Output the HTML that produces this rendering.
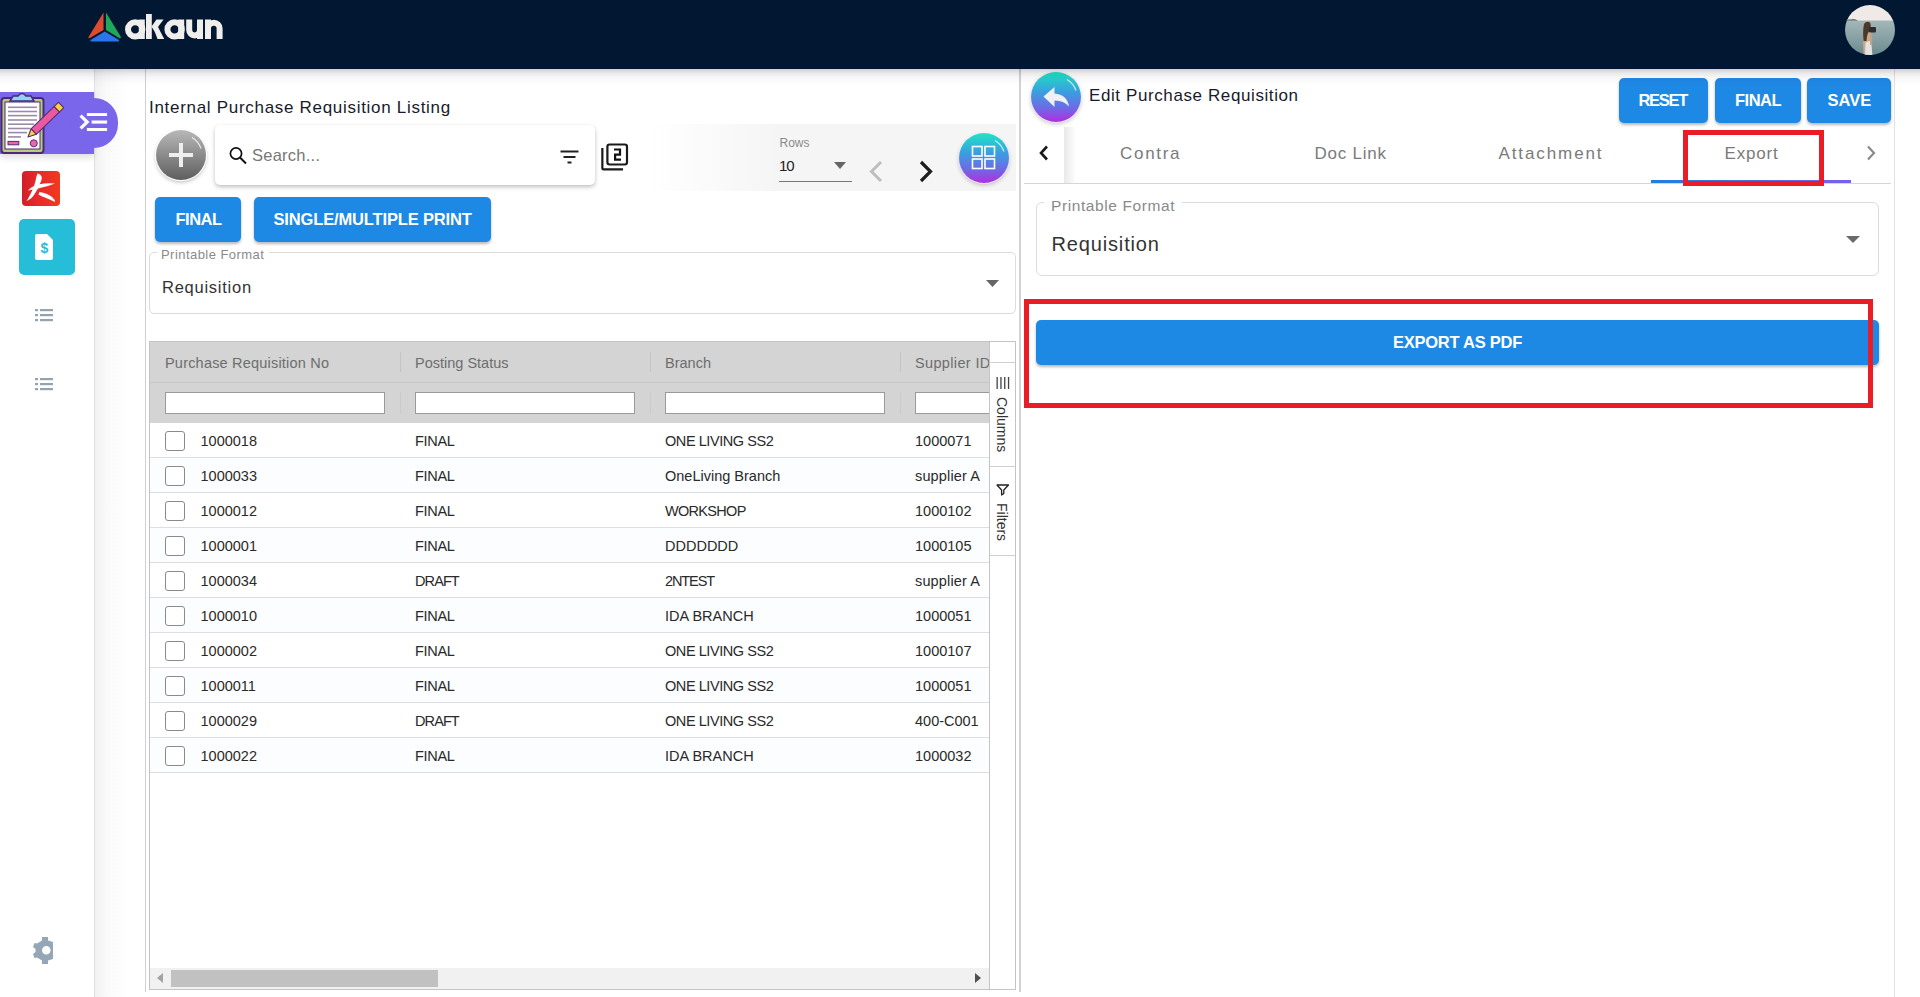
<!DOCTYPE html>
<html><head><meta charset="utf-8">
<style>
*{box-sizing:border-box;margin:0;padding:0}
html,body{width:1920px;height:997px;overflow:hidden;background:#fff;font-family:"Liberation Sans",sans-serif;color:#222}
.abs{position:absolute}
.t{position:absolute;line-height:1;white-space:nowrap}
#hdr{position:absolute;left:0;top:0;width:1920px;height:69px;background:#021731;z-index:5}
#hdrshadow{position:absolute;left:0;top:69px;width:1920px;height:19px;background:linear-gradient(rgba(10,20,40,.2),rgba(0,0,0,.09) 4px,rgba(0,0,0,.04) 8px,rgba(0,0,0,.01) 13px,rgba(0,0,0,0));z-index:4}
#side{position:absolute;left:0;top:69px;width:95px;height:928px;background:#fff;border-right:1px solid #e0e0e0}
#strip{position:absolute;left:95px;top:69px;width:51px;height:928px;background:linear-gradient(90deg,#f1f1f1,#fafafa 12px,#fff 32px)}
#stripline{position:absolute;left:145px;top:69px;width:1px;height:923px;background:#d0d0d0}
#lp{position:absolute;left:146px;top:69px;width:875px;height:923px;background:#fff;border-right:2px solid #d2d2d2}
#rp{position:absolute;left:1021px;top:69px;width:874px;height:928px;background:#fff;border-right:1px solid #e2e2e2}
.btn{position:absolute;background:#1e88e5;border-radius:5px;box-shadow:0 2px 3px rgba(0,0,0,.28)}
.bt{position:absolute;line-height:1;white-space:nowrap;color:#fff;font-weight:bold}
.cb{position:absolute;left:165px;width:20px;height:20px;border:1.5px solid #8a8a8a;border-radius:3px;background:#fff}
.fin{position:absolute;height:22px;background:#fff;border:1px solid #9a9a9a}
.hsep{position:absolute;width:1px;background:#c4c4c4}
.red{position:absolute;border:5px solid #ea1c25;z-index:10}
</style></head><body>
<div id="hdr">
  <svg class="abs" style="left:88px;top:12px" width="34" height="30" viewBox="0 0 34 30">
    <path d="M15.5 0.5 L15.5 18 L1 26.5 Q0 26 0.8 24.5 Z" fill="#e04a2e"/>
    <path d="M18 0.5 L32.8 24.8 Q33.2 26 32 26.5 L18 18 Z" fill="#1fa85a"/>
    <path d="M16.8 19.5 L31 28 Q31.5 29.5 30 29.5 L3.5 29.5 Q2 29.5 2.5 28 Z" fill="#2a76e8"/>
  </svg>
  <svg class="abs" style="left:124px;top:13px" width="100" height="28" viewBox="0 0 100 28">
    <g fill="none" stroke="#efeeec" stroke-width="6">
      <circle cx="11.2" cy="16.4" r="7.2"/>
      <circle cx="50.6" cy="16.4" r="7.2"/>
      <path d="M65.2 6.5 V17 A5.4 5.4 0 0 0 76 17"/>
      <path d="M84 26 V15.5 A5.8 5.8 0 0 1 95.6 15.5 V26"/>
    </g>
    <g fill="#efeeec">
      <rect x="14.8" y="6.5" width="6" height="19.5"/>
      <rect x="54.2" y="6.5" width="6" height="19.5"/>
      <rect x="73" y="6.5" width="6" height="19.5"/>
      <rect x="81" y="6.5" width="6" height="19.5"/>
      <rect x="22" y="1" width="5.8" height="25"/>
      <path d="M27.5 13.5 L32.5 6.5 L39.6 6.5 L30.5 18.5 Z"/>
      <path d="M29.5 15.5 L33 12 L40.2 26 L33.5 26 Z"/>
    </g>
  </svg>
  <svg class="abs" style="left:1845px;top:5px" width="50" height="50" viewBox="0 0 50 50">
    <defs><clipPath id="av"><circle cx="25" cy="25" r="25"/></clipPath>
    <linearGradient id="sea" x1="0" y1="0" x2="0" y2="1"><stop offset="0" stop-color="#a3b7b8"/><stop offset="0.5" stop-color="#87a1a4"/><stop offset="1" stop-color="#6a8a8e"/></linearGradient></defs>
    <g clip-path="url(#av)">
      <rect x="0" y="0" width="50" height="16" fill="#efeae5"/>
      <rect x="0" y="15.5" width="50" height="35" fill="url(#sea)"/>
      <path d="M0 15.5 Q3 14 6 14.5 Q9 13.5 13 15.5 Z" fill="#3c4a48"/>
      <path d="M18.5 50 L18 33 Q17 26 19 19 Q21 15.5 24.5 17 Q27 19 26 24 L27 50 Z" fill="#c9a98c"/>
      <path d="M18.5 36 Q17.5 26 19 19 Q21.5 15.5 25 17.5 Q26.5 20 25 26 Q22 27 21.5 36 Z" fill="#4a3a2c"/>
      <path d="M20 50 L20.5 38 Q23 35 26 37 L27.5 50 Z" fill="#e6e2e0"/>
      <rect x="24" y="22" width="7" height="5.5" rx="1" fill="#2b2d2e"/>
      <path d="M25 27 Q28 30 27 40 L25 40 Z" fill="#c4a285"/>
    </g>
  </svg>
</div>
<div id="side">
  <!-- acrobat-ish -->
  <div class="abs" style="left:22px;top:102px;width:38px;height:35px;border-radius:4px;background:linear-gradient(90deg,#cf2027,#e8282a 40%,#f03a1e)"></div>
  <svg class="abs" style="left:22px;top:102px" width="38" height="35" viewBox="0 0 38 35">
    <path d="M15.5 2.5 Q21 3.5 19.5 9 Q17 17 12 24 Q9 28.5 4.5 30 Q6 28 8 24 Q12 17 13.5 10 Q14 6 15.5 2.5 Z" fill="#fff"/>
    <path d="M6 19.5 Q9 15.5 16 13.5 Q25 11.5 33 12.5 Q27 15 18 17 Q11 18.5 6 19.5 Z" fill="#fff"/>
    <path d="M17.5 21 Q25 22 30 26 Q33 28.5 33 31 Q29 29 24 27 Q19 25 16.5 23.5 Z" fill="#fff"/>
  </svg>
  <!-- teal -->
  <div class="abs" style="left:19px;top:150px;width:56px;height:56px;border-radius:5px;background:#25bdd8"></div>
  <svg class="abs" style="left:35px;top:165px" width="19" height="26" viewBox="0 0 19 26">
    <path d="M2 0 L12 0 L18 6 L18 24 Q18 26 16 26 L2 26 Q0 26 0 24 L0 2 Q0 0 2 0 Z" fill="#fff"/>
    <text x="9.5" y="19" text-anchor="middle" font-family="Liberation Sans" font-weight="bold" font-size="14" fill="#25bdd8">$</text>
  </svg>
  <!-- list icons -->
  <svg class="abs" style="left:35px;top:240px" width="19" height="13" viewBox="0 0 19 13">
    <g fill="#93a3af"><rect x="0" y="0" width="3" height="2.2"/><rect x="5" y="0" width="13" height="2.2"/>
    <rect x="0" y="5" width="3" height="2.2"/><rect x="5" y="5" width="13" height="2.2"/>
    <rect x="0" y="10" width="3" height="2.2"/><rect x="5" y="10" width="13" height="2.2"/></g>
  </svg>
  <svg class="abs" style="left:35px;top:309px" width="19" height="13" viewBox="0 0 19 13">
    <g fill="#93a3af"><rect x="0" y="0" width="3" height="2.2"/><rect x="5" y="0" width="13" height="2.2"/>
    <rect x="0" y="5" width="3" height="2.2"/><rect x="5" y="5" width="13" height="2.2"/>
    <rect x="0" y="10" width="3" height="2.2"/><rect x="5" y="10" width="13" height="2.2"/></g>
  </svg>
  <!-- gear -->
  <svg class="abs" style="left:33px;top:868px" width="21" height="27" viewBox="0 0 21 27">
    <path fill="#94a7b6" d="M9 0 L15 0 L15 3.5 L20 5 L20 22 L15 23.5 L15 27 L9 27 L9 23.5 L4 20.5 L1.5 21 L0 17 L2.5 15 L2.5 12 L0 10 L1.5 6 L4 6.5 L9 3.5 Z M13.3 9 A4.3 4.3 0 1 0 13.3 17.6 A4.3 4.3 0 1 0 13.3 9 Z" fill-rule="evenodd"/>
  </svg>
</div>
<div id="strip"></div><div id="stripline"></div>
<div class="abs" style="left:0;top:69px;width:120px;height:100px;z-index:3">
  <!-- purple pill -->
  <div class="abs" style="left:0;top:23px;width:94px;height:62px;background:#7966ea;box-shadow:0 4px 6px rgba(0,0,0,.12)"></div>
  <div class="abs" style="left:70px;top:29px;width:48px;height:50px;border-radius:25px;background:#7966ea"></div>
  <svg class="abs" style="left:0;top:23px" width="64" height="62" viewBox="0 0 64 62">
    <rect x="1.5" y="6" width="42" height="55" rx="3" fill="#b9cc7c" stroke="#4a2a78" stroke-width="2"/>
    <rect x="5" y="10" width="35" height="47" fill="#fff" stroke="#4a2a78" stroke-width="1"/>
    <path d="M10 9 L13 4 L18 4 Q22 -1 26 4 L31 4 L34 9 Z" fill="#8fd3ee" stroke="#4a2a78" stroke-width="1.5"/>
    <g stroke="#9a8aaa" stroke-width="1.6">
      <line x1="8" y1="15.3" x2="37" y2="15.3"/><line x1="8" y1="19.5" x2="37" y2="19.5"/><line x1="8" y1="23.6" x2="37" y2="23.6"/>
      <line x1="8" y1="28" x2="37" y2="28"/><line x1="8" y1="32.2" x2="34" y2="32.2"/><line x1="8" y1="36.5" x2="30" y2="36.5"/>
      <line x1="8" y1="40.6" x2="27" y2="40.6"/><line x1="8" y1="44.9" x2="21" y2="44.9"/>
    </g>
    <rect x="8" y="49.4" width="10.8" height="3.4" fill="#e867a8" stroke="#5a2a78" stroke-width="1"/>
    <circle cx="33.8" cy="51.3" r="3.5" fill="#e867a8" stroke="#5a2a78" stroke-width="1"/>
    <g transform="rotate(-44 28 45)">
      <path d="M28 45 L36 41.2 L36 48.8 Z" fill="#f6d23a" stroke="#5a2a78" stroke-width="1.1" stroke-linejoin="round"/>
      <rect x="36" y="41.2" width="32" height="7.6" fill="#ea5a9e" stroke="#5a2a78" stroke-width="1.1"/>
      <rect x="68" y="41.2" width="6" height="7.6" fill="#f6d23a" stroke="#5a2a78" stroke-width="1.1"/>
    </g>
  </svg>
  <svg class="abs" style="left:79px;top:43px" width="30" height="20" viewBox="0 0 30 20">
    <path d="M1.6 3.6 L8.2 10 L1.6 16.4" fill="none" stroke="#fff" stroke-width="3.2"/>
    <rect x="7.9" y="1.1" width="20.2" height="2.9" fill="#fff"/>
    <rect x="12.6" y="8.5" width="15.5" height="3.1" fill="#fff"/>
    <rect x="7.9" y="16" width="20.2" height="3" fill="#fff"/>
  </svg>
</div>
<div id="lp">
</div>
<div id="rp"></div>
<div id="hdrshadow"></div>

<!-- LEFT PANEL CONTENT -->
<div class="t" style="left:149px;top:98.6px;font-size:17px;color:#1a1a2c;letter-spacing:0.7px">Internal Purchase Requisition Listing</div>
<!-- plus button -->
<div class="abs" style="left:156px;top:130px;width:50px;height:50px;border-radius:50%;background:linear-gradient(#b8b8b8,#5e5e5e);box-shadow:0 0 0 1.2px rgba(255,255,255,.9),0 2px 4px rgba(0,0,0,.3)"></div>
<svg class="abs" style="left:156px;top:130px" width="50" height="50" viewBox="0 0 50 50"><path d="M36 7.5 A21 21 0 0 1 45 18.5" fill="none" stroke="rgba(255,255,255,.8)" stroke-width="1.1"/></svg>
<svg class="abs" style="left:168px;top:142px" width="26" height="26" viewBox="0 0 26 26"><rect x="11" y="1" width="4" height="24" fill="#eee"/><rect x="1" y="11" width="24" height="4" fill="#eee"/></svg>
<!-- search box -->
<div class="abs" style="left:215px;top:125px;width:380px;height:60px;border-radius:5px;background:#fff;box-shadow:0 2px 4px rgba(0,0,0,.25)"></div>
<svg class="abs" style="left:229px;top:146px" width="19" height="19" viewBox="0 0 19 19"><circle cx="7" cy="7.5" r="5.6" fill="none" stroke="#111" stroke-width="1.7"/><line x1="11" y1="11.5" x2="17" y2="17.5" stroke="#111" stroke-width="2"/></svg>
<div class="t" style="left:252px;top:147px;font-size:16.5px;color:#777;letter-spacing:0.25px">Search...</div>
<svg class="abs" style="left:560px;top:149.5px" width="20" height="14" viewBox="0 0 20 14"><rect x="0.5" y="0.5" width="18" height="2" fill="#222"/><rect x="3.5" y="6" width="12" height="2" fill="#222"/><rect x="7.5" y="11.5" width="4" height="2" fill="#222"/></svg>
<svg class="abs" style="left:600px;top:142px" width="30" height="30" viewBox="0 0 30 30">
  <path d="M2.35 6 L2.35 26.3 Q2.35 27.45 3.5 27.45 L23 27.45" fill="none" stroke="#1a1a1a" stroke-width="2.2"/>
  <rect x="7.4" y="2.5" width="19.6" height="20" rx="2.2" fill="none" stroke="#1a1a1a" stroke-width="2.2"/>
  <path d="M14 7.5 H20 V12.6 H15.1 V17.7 H21" fill="none" stroke="#111" stroke-width="2.2"/>
</svg>
<!-- pagination strip -->
<div class="abs" style="left:650px;top:124px;width:366px;height:67px;background:linear-gradient(90deg,rgba(245,245,245,0),#f5f5f5 35%,#f5f5f5)"></div>
<div class="t" style="left:779.5px;top:137.3px;font-size:12px;color:#8a8a8a">Rows</div>
<div class="t" style="left:779px;top:157.8px;font-size:15px;color:#222;letter-spacing:-1px">10</div>
<svg class="abs" style="left:834px;top:162px" width="12" height="7" viewBox="0 0 12 7"><path d="M0 0 L12 0 L6 7 Z" fill="#666"/></svg>
<div class="abs" style="left:779px;top:180.5px;width:73px;height:1px;background:#777"></div>
<svg class="abs" style="left:868px;top:160px" width="16" height="23" viewBox="0 0 16 23"><path d="M13 2 L3.5 11.5 L13 21" fill="none" stroke="#bdbdbd" stroke-width="3"/></svg>
<svg class="abs" style="left:918px;top:160px" width="17" height="23" viewBox="0 0 17 23"><path d="M3 2 L12.5 11.5 L3 21" fill="none" stroke="#1e1e1e" stroke-width="3.2"/></svg>
<div class="abs" style="left:959px;top:133px;width:50px;height:50px;border-radius:50%;background:linear-gradient(#1de6c4 0%,#3a9ee0 40%,#6a6ee6 70%,#b02ee0 100%);box-shadow:0 0 0 1px rgba(255,235,255,.7),0 2px 4px rgba(0,0,0,.25)"></div>
<svg class="abs" style="left:959px;top:133px" width="50" height="50" viewBox="0 0 50 50"><path d="M36 7.5 A21 21 0 0 1 45 18.5" fill="none" stroke="rgba(255,255,255,.8)" stroke-width="1.1"/></svg>
<svg class="abs" style="left:971px;top:145px" width="26" height="26" viewBox="0 0 26 26"><g fill="none" stroke="#fff" stroke-width="1.6"><rect x="1.5" y="1.5" width="9.5" height="9.5"/><rect x="14" y="1.5" width="9.5" height="9.5"/><rect x="1.5" y="14" width="9.5" height="9.5"/><rect x="14" y="14" width="9.5" height="9.5"/></g></svg>
<!-- buttons -->
<div class="btn" style="left:155px;top:197px;width:86px;height:45px"></div>
<div class="bt" style="left:175.5px;top:211px;font-size:16.5px;letter-spacing:-0.5px">FINAL</div>
<div class="btn" style="left:254px;top:197px;width:237px;height:45px"></div>
<div class="bt" style="left:273.5px;top:211px;font-size:16.5px;letter-spacing:-0.15px">SINGLE/MULTIPLE PRINT</div>
<!-- printable format left -->
<div class="abs" style="left:149px;top:252px;width:867px;height:62px;border:1px solid #dcdcdc;border-radius:5px"></div>
<div class="abs" style="left:157px;top:248px;width:112px;height:10px;background:#fff"></div>
<div class="t" style="left:161px;top:248.4px;font-size:13px;color:#8a8a8a;letter-spacing:0.45px">Printable Format</div>
<div class="t" style="left:162px;top:279.4px;font-size:16.5px;color:#333;letter-spacing:0.75px">Requisition</div>
<svg class="abs" style="left:986px;top:280px" width="13" height="7" viewBox="0 0 13 7"><path d="M0 0 L13 0 L6.5 7 Z" fill="#666"/></svg>

<!-- GRID -->
<div class="abs" style="left:149px;top:341px;width:867px;height:649px;border:1px solid #c4c4c4;background:#fff"></div>
<div class="abs" style="left:150px;top:342px;width:839px;height:81px;background:#d4d4d4"></div>
<div class="abs" style="left:150px;top:382px;width:839px;height:1px;background:#c6c6c6"></div>
<div class="hsep" style="left:399.5px;top:352px;height:20px"></div>
<div class="hsep" style="left:649.5px;top:352px;height:20px"></div>
<div class="hsep" style="left:899.5px;top:352px;height:20px"></div>
<div class="hsep" style="left:399.5px;top:392px;height:22px;background:#cacaca"></div>
<div class="hsep" style="left:649.5px;top:392px;height:22px;background:#cacaca"></div>
<div class="hsep" style="left:899.5px;top:392px;height:22px;background:#cacaca"></div>
<div class="t" style="left:165px;top:355.5px;font-size:14.5px;color:#6d6d6d;letter-spacing:0.2px">Purchase Requisition No</div>
<div class="t" style="left:415px;top:355.5px;font-size:14.5px;color:#6d6d6d">Posting Status</div>
<div class="t" style="left:665px;top:355.5px;font-size:14.5px;color:#6d6d6d">Branch</div>
<div class="t" style="left:915px;top:355.5px;font-size:14.5px;color:#6d6d6d;letter-spacing:0.35px">Supplier ID</div>
<div class="fin" style="left:165px;top:392px;width:220px"></div>
<div class="fin" style="left:415px;top:392px;width:220px"></div>
<div class="fin" style="left:665px;top:392px;width:220px"></div>
<div class="fin" style="left:915px;top:392px;width:80px"></div>
<div class="abs" style="left:150px;top:423px;width:839px;height:35px;background:#fff;border-bottom:1px solid #dcdee2"></div>
<div class="cb" style="top:431px"></div>
<div class="t" style="left:200.5px;top:433.53px;font-size:14.5px;color:#2a2a2a;font-weight:normal;letter-spacing:0px;">1000018</div>
<div class="t" style="left:415px;top:433.53px;font-size:14.5px;color:#2a2a2a;font-weight:normal;letter-spacing:-0.3px;">FINAL</div>
<div class="t" style="left:665px;top:433.53px;font-size:14.5px;color:#2a2a2a;font-weight:normal;letter-spacing:-0.43px;">ONE LIVING SS2</div>
<div class="t" style="left:915px;top:433.53px;font-size:14.5px;color:#2a2a2a;font-weight:normal;letter-spacing:0px;">1000071</div>
<div class="abs" style="left:150px;top:458px;width:839px;height:35px;background:#fcfdfe;border-bottom:1px solid #dcdee2"></div>
<div class="cb" style="top:466px"></div>
<div class="t" style="left:200.5px;top:468.53px;font-size:14.5px;color:#2a2a2a;font-weight:normal;letter-spacing:0px;">1000033</div>
<div class="t" style="left:415px;top:468.53px;font-size:14.5px;color:#2a2a2a;font-weight:normal;letter-spacing:-0.3px;">FINAL</div>
<div class="t" style="left:665px;top:468.53px;font-size:14.5px;color:#2a2a2a;font-weight:normal;letter-spacing:0px;">OneLiving Branch</div>
<div class="t" style="left:915px;top:468.53px;font-size:14.5px;color:#2a2a2a;font-weight:normal;letter-spacing:0.15px;">supplier A</div>
<div class="abs" style="left:150px;top:493px;width:839px;height:35px;background:#fff;border-bottom:1px solid #dcdee2"></div>
<div class="cb" style="top:501px"></div>
<div class="t" style="left:200.5px;top:503.53px;font-size:14.5px;color:#2a2a2a;font-weight:normal;letter-spacing:0px;">1000012</div>
<div class="t" style="left:415px;top:503.53px;font-size:14.5px;color:#2a2a2a;font-weight:normal;letter-spacing:-0.3px;">FINAL</div>
<div class="t" style="left:665px;top:503.53px;font-size:14.5px;color:#2a2a2a;font-weight:normal;letter-spacing:-0.7px;">WORKSHOP</div>
<div class="t" style="left:915px;top:503.53px;font-size:14.5px;color:#2a2a2a;font-weight:normal;letter-spacing:0px;">1000102</div>
<div class="abs" style="left:150px;top:528px;width:839px;height:35px;background:#fcfdfe;border-bottom:1px solid #dcdee2"></div>
<div class="cb" style="top:536px"></div>
<div class="t" style="left:200.5px;top:538.53px;font-size:14.5px;color:#2a2a2a;font-weight:normal;letter-spacing:0px;">1000001</div>
<div class="t" style="left:415px;top:538.53px;font-size:14.5px;color:#2a2a2a;font-weight:normal;letter-spacing:-0.3px;">FINAL</div>
<div class="t" style="left:665px;top:538.53px;font-size:14.5px;color:#2a2a2a;font-weight:normal;letter-spacing:0px;">DDDDDDD</div>
<div class="t" style="left:915px;top:538.53px;font-size:14.5px;color:#2a2a2a;font-weight:normal;letter-spacing:0px;">1000105</div>
<div class="abs" style="left:150px;top:563px;width:839px;height:35px;background:#fff;border-bottom:1px solid #dcdee2"></div>
<div class="cb" style="top:571px"></div>
<div class="t" style="left:200.5px;top:573.53px;font-size:14.5px;color:#2a2a2a;font-weight:normal;letter-spacing:0px;">1000034</div>
<div class="t" style="left:415px;top:573.53px;font-size:14.5px;color:#2a2a2a;font-weight:normal;letter-spacing:-0.9px;">DRAFT</div>
<div class="t" style="left:665px;top:573.53px;font-size:14.5px;color:#2a2a2a;font-weight:normal;letter-spacing:-1.1px;">2NTEST</div>
<div class="t" style="left:915px;top:573.53px;font-size:14.5px;color:#2a2a2a;font-weight:normal;letter-spacing:0.15px;">supplier A</div>
<div class="abs" style="left:150px;top:598px;width:839px;height:35px;background:#fcfdfe;border-bottom:1px solid #dcdee2"></div>
<div class="cb" style="top:606px"></div>
<div class="t" style="left:200.5px;top:608.53px;font-size:14.5px;color:#2a2a2a;font-weight:normal;letter-spacing:0px;">1000010</div>
<div class="t" style="left:415px;top:608.53px;font-size:14.5px;color:#2a2a2a;font-weight:normal;letter-spacing:-0.3px;">FINAL</div>
<div class="t" style="left:665px;top:608.53px;font-size:14.5px;color:#2a2a2a;font-weight:normal;letter-spacing:0px;">IDA BRANCH</div>
<div class="t" style="left:915px;top:608.53px;font-size:14.5px;color:#2a2a2a;font-weight:normal;letter-spacing:0px;">1000051</div>
<div class="abs" style="left:150px;top:633px;width:839px;height:35px;background:#fff;border-bottom:1px solid #dcdee2"></div>
<div class="cb" style="top:641px"></div>
<div class="t" style="left:200.5px;top:643.53px;font-size:14.5px;color:#2a2a2a;font-weight:normal;letter-spacing:0px;">1000002</div>
<div class="t" style="left:415px;top:643.53px;font-size:14.5px;color:#2a2a2a;font-weight:normal;letter-spacing:-0.3px;">FINAL</div>
<div class="t" style="left:665px;top:643.53px;font-size:14.5px;color:#2a2a2a;font-weight:normal;letter-spacing:-0.43px;">ONE LIVING SS2</div>
<div class="t" style="left:915px;top:643.53px;font-size:14.5px;color:#2a2a2a;font-weight:normal;letter-spacing:0px;">1000107</div>
<div class="abs" style="left:150px;top:668px;width:839px;height:35px;background:#fcfdfe;border-bottom:1px solid #dcdee2"></div>
<div class="cb" style="top:676px"></div>
<div class="t" style="left:200.5px;top:678.53px;font-size:14.5px;color:#2a2a2a;font-weight:normal;letter-spacing:0px;">1000011</div>
<div class="t" style="left:415px;top:678.53px;font-size:14.5px;color:#2a2a2a;font-weight:normal;letter-spacing:-0.3px;">FINAL</div>
<div class="t" style="left:665px;top:678.53px;font-size:14.5px;color:#2a2a2a;font-weight:normal;letter-spacing:-0.43px;">ONE LIVING SS2</div>
<div class="t" style="left:915px;top:678.53px;font-size:14.5px;color:#2a2a2a;font-weight:normal;letter-spacing:0px;">1000051</div>
<div class="abs" style="left:150px;top:703px;width:839px;height:35px;background:#fff;border-bottom:1px solid #dcdee2"></div>
<div class="cb" style="top:711px"></div>
<div class="t" style="left:200.5px;top:713.53px;font-size:14.5px;color:#2a2a2a;font-weight:normal;letter-spacing:0px;">1000029</div>
<div class="t" style="left:415px;top:713.53px;font-size:14.5px;color:#2a2a2a;font-weight:normal;letter-spacing:-0.9px;">DRAFT</div>
<div class="t" style="left:665px;top:713.53px;font-size:14.5px;color:#2a2a2a;font-weight:normal;letter-spacing:-0.43px;">ONE LIVING SS2</div>
<div class="t" style="left:915px;top:713.53px;font-size:14.5px;color:#2a2a2a;font-weight:normal;letter-spacing:0px;">400-C001</div>
<div class="abs" style="left:150px;top:738px;width:839px;height:35px;background:#fcfdfe;border-bottom:1px solid #dcdee2"></div>
<div class="cb" style="top:746px"></div>
<div class="t" style="left:200.5px;top:748.53px;font-size:14.5px;color:#2a2a2a;font-weight:normal;letter-spacing:0px;">1000022</div>
<div class="t" style="left:415px;top:748.53px;font-size:14.5px;color:#2a2a2a;font-weight:normal;letter-spacing:-0.3px;">FINAL</div>
<div class="t" style="left:665px;top:748.53px;font-size:14.5px;color:#2a2a2a;font-weight:normal;letter-spacing:0px;">IDA BRANCH</div>
<div class="t" style="left:915px;top:748.53px;font-size:14.5px;color:#2a2a2a;font-weight:normal;letter-spacing:0px;">1000032</div>

<!-- side bar columns/filters -->
<div class="abs" style="left:989px;top:342px;width:26px;height:647px;background:#fff;border-left:1px solid #c4c4c4"></div>
<div class="abs" style="left:990px;top:362px;width:25px;height:1px;background:#d0d0d0"></div>
<div class="abs" style="left:990px;top:466px;width:25px;height:1px;background:#d0d0d0"></div>
<div class="abs" style="left:990px;top:555px;width:25px;height:1px;background:#d0d0d0"></div>
<svg class="abs" style="left:996px;top:377px" width="14" height="12" viewBox="0 0 14 12"><g fill="#444"><rect x="0.5" y="0" width="1.3" height="12"/><rect x="4.3" y="0" width="1.3" height="12"/><rect x="8.1" y="0" width="1.3" height="12"/><rect x="11.9" y="0" width="1.3" height="12"/></g></svg>
<div class="t" style="left:995px;top:397px;font-size:14px;color:#333;writing-mode:vertical-rl">Columns</div>
<svg class="abs" style="left:996px;top:484px" width="14" height="12" viewBox="0 0 14 12"><path d="M1 1 L12.5 1 L7.8 6 L7.8 9.5 L5.6 11 L5.6 6 Z" fill="none" stroke="#222" stroke-width="1.3" stroke-linejoin="round"/></svg>
<div class="t" style="left:995px;top:503px;font-size:14px;color:#333;writing-mode:vertical-rl">Filters</div>
<!-- h scrollbar -->
<div class="abs" style="left:150px;top:968px;width:839px;height:21px;background:#f1f1f1"></div>
<div class="abs" style="left:171px;top:970px;width:267px;height:17px;background:#c1c1c1"></div>
<svg class="abs" style="left:157px;top:973px" width="7" height="10" viewBox="0 0 7 10"><path d="M6 0 L0 5 L6 10 Z" fill="#a3a3a3"/></svg>
<svg class="abs" style="left:975px;top:973px" width="7" height="10" viewBox="0 0 7 10"><path d="M0 0 L6 5 L0 10 Z" fill="#505050"/></svg>

<!-- RIGHT PANEL CONTENT -->
<div class="abs" style="left:1031px;top:72px;width:50px;height:50px;border-radius:50%;background:linear-gradient(#1de6c4 0%,#3a9ee0 40%,#6a6ee6 70%,#b02ee0 100%);box-shadow:0 0 0 1px rgba(255,235,255,.7),0 2px 4px rgba(0,0,0,.25)"></div>
<svg class="abs" style="left:1031px;top:72px" width="50" height="50" viewBox="0 0 50 50"><path d="M36 7.5 A21 21 0 0 1 45 18.5" fill="none" stroke="rgba(255,255,255,.8)" stroke-width="1.1"/></svg>
<svg class="abs" style="left:1043px;top:85px" width="28" height="24" viewBox="0 0 28 24"><path d="M11.5 2 L0.5 11.5 L11.5 22 L11.5 15.5 Q21 15.5 26 21.5 Q24 9.5 11.5 8.5 Z" fill="#eef0f4"/></svg>
<div class="t" style="left:1089px;top:86.9px;font-size:17px;color:#1a1a2c;letter-spacing:0.6px">Edit Purchase Requisition</div>
<div class="btn" style="left:1619px;top:78px;width:89px;height:45px"></div>
<div class="bt" style="left:1638.5px;top:92px;font-size:16.5px;letter-spacing:-1.3px">RESET</div>
<div class="btn" style="left:1715px;top:78px;width:86px;height:45px"></div>
<div class="bt" style="left:1735px;top:92px;font-size:16.5px;letter-spacing:-0.5px">FINAL</div>
<div class="btn" style="left:1807px;top:78px;width:84px;height:45px"></div>
<div class="bt" style="left:1827.5px;top:92px;font-size:16.5px">SAVE</div>
<!-- tabs -->
<div class="abs" style="left:1024px;top:183px;width:867px;height:1px;background:#d6d6d6"></div>
<div class="abs" style="left:1064px;top:127px;width:12px;height:56px;background:linear-gradient(90deg,rgba(0,0,0,.09),rgba(0,0,0,0))"></div>
<svg class="abs" style="left:1038px;top:145px" width="12" height="16" viewBox="0 0 12 16"><path d="M9 1.5 L3 8 L9 14.5" fill="none" stroke="#1a1a1a" stroke-width="2.6"/></svg>
<div class="t" style="left:1120px;top:144.6px;font-size:17px;color:#7a7a7a;letter-spacing:1.7px">Contra</div>
<div class="t" style="left:1314.5px;top:144.6px;font-size:17px;color:#7a7a7a;letter-spacing:0.75px">Doc Link</div>
<div class="t" style="left:1498.5px;top:144.6px;font-size:17px;color:#7a7a7a;letter-spacing:1.9px">Attachment</div>
<div class="t" style="left:1724.5px;top:144.6px;font-size:17px;color:#7a7a7a;letter-spacing:0.8px">Export</div>
<div class="abs" style="left:1651px;top:180px;width:200px;height:3px;background:linear-gradient(90deg,#1e7fe0,#7a5ff0)"></div>
<svg class="abs" style="left:1865px;top:145px" width="12" height="16" viewBox="0 0 12 16"><path d="M3 1.5 L9 8 L3 14.5" fill="none" stroke="#8a8a8a" stroke-width="2.2"/></svg>
<div class="red" style="left:1683px;top:130px;width:141px;height:56px"></div>
<!-- printable format right -->
<div class="abs" style="left:1036px;top:202px;width:843px;height:74px;border:1px solid #dcdcdc;border-radius:6px"></div>
<div class="abs" style="left:1044px;top:196px;width:138px;height:12px;background:#fff"></div>
<div class="t" style="left:1051px;top:197.6px;font-size:15.5px;color:#8a8a8a;letter-spacing:0.6px">Printable Format</div>
<div class="t" style="left:1051.5px;top:234.1px;font-size:20px;color:#333;letter-spacing:0.85px">Requisition</div>
<svg class="abs" style="left:1846px;top:236px" width="14" height="7" viewBox="0 0 14 7"><path d="M0 0 L14 0 L7 7 Z" fill="#6a6a6a"/></svg>
<div class="btn" style="left:1036px;top:320px;width:843px;height:45px"></div>
<div class="bt" style="left:1393px;top:334px;font-size:16.5px;letter-spacing:-0.25px">EXPORT AS PDF</div>
<div class="red" style="left:1024px;top:299px;width:849px;height:109px"></div>
</body></html>
